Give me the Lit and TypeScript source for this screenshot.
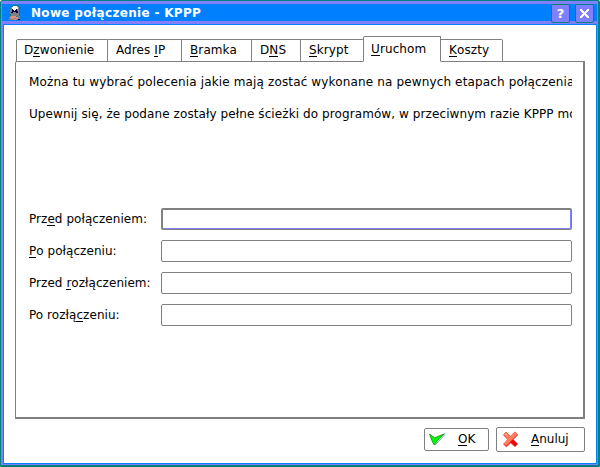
import { LitElement, html, css, svg } from "lit";
import { customElement, property } from "lit/decorators.js";

/* Splits "D&zwonienie" so that the letter after & is underlined. */
const mnemonic = (s: string) => {
  const i = s.indexOf("&");
  return i < 0 ? html`${s}` : html`${s.slice(0, i)}<u>${s[i + 1]}</u>${s.slice(i + 2)}`;
};

const pixels = (rows: string[], colors: Record<string, string>) => {
  const out: unknown[] = [];
  rows.forEach((row, y) => {
    for (let x = 0; x < row.length; ) {
      let end = x + 1;
      while (end < row.length && row[end] === row[x]) end++;
      if (colors[row[x]]) out.push(svg`<rect x=${x} y=${y} width=${end - x} height="1" fill=${colors[row[x]]}/>`);
      x = end;
    }
  });
  return html`<svg width=${rows[0].length} height=${rows.length} shape-rendering="crispEdges">${out}</svg>`;
};

const appIcon = pixels(
  [
    "....tttttt..",
    "..ttwwwwgt..",
    "..gwwwwwwgt.",
    ".tgwwwwwwgt.",
    ".ggkwwwkggt.",
    ".ggkkwkkggt.",
    ".ggnkkknkgt.",
    ".gkkgggkkgt.",
    ".gggggggggt.",
    ".tggggggggt.",
    ".tggggggggt.",
    ".gppppptggg.",
    "gppppppppgg.",
    "ggpppggppgg.",
    "gggggppggkk.",
  ],
  { t: "#207878", w: "#ffffff", g: "#808080", k: "#000040", n: "#000080", p: "#e09080" },
);

const closeGlyph = pixels(
  ["ww.....ww", "www...www", ".www.www.", "..wwwww..", "...www...", "..wwwww..", ".www.www.", "www...www", "ww.....ww"],
  { w: "#fff" },
);

const okIcon = html`<svg width="16" height="13" viewBox="0 0 16 13">
  <path d="M2 4.5 L6 12 L9.5 8.5 L15.5 2" fill="none" stroke="#80a0c0" stroke-width="1"/>
  <path d="M.5 1 L5.5 4.8 L15.5 .8 L9 7 L5.2 11.8 L3.5 9 Z" fill="#00ff00" stroke="#008000" stroke-width=".7"/>
</svg>`;

const cancelIcon = html`<svg width="17" height="17" viewBox="0 0 17 17">
  <path d="M1.5 4 L4 1.5 L8.5 5.5 L13 1 L16 4 L11.5 8.5 L16 13 L13 16 L8.5 12 L4.5 16 L1.5 13.5 L6 9 Z" fill="#ff0000" stroke="#c0a0a0" stroke-width=".6"/>
  <path d="M1.5 3.5 L4 1 L8.5 5.3 L13 .8 L15.5 3.5 L10.8 8 L4.3 14.8 L1.5 13 L5.7 8.5 Z" fill="#ff8060" stroke="#ff5040" stroke-width=".6"/>
  <path d="M3 3h2v1h-2z" fill="#ffc060"/>
</svg>`;

@customElement("title-button")
class TitleButton extends LitElement {
  static styles = css`
    :host { display: flex; align-items: center; justify-content: center; box-sizing: border-box; width: 19px; height: 19px; border: 1px solid #008080; border-radius: 2px; background: #8080ff; color: #fff; font: bold 13px/17px "DejaVu Sans", sans-serif; }
  `;
  render() { return html`<slot></slot>`; }
}

@customElement("path-field")
class PathField extends LitElement {
  @property() label = "";
  @property({ type: Boolean, reflect: true }) active = false;
  static styles = css`
    :host { display: flex; height: 22px; }
    .label { width: 132px; line-height: 22px; white-space: nowrap; letter-spacing: .05px; }
    .box { flex: 1; box-sizing: border-box; border: 1px solid #808080; border-radius: 2px; background: #fff; }
    :host([active]) .box { border-top-width: 2px; border-left-width: 2px; box-shadow: inset -1px -1px #8080ff; }
    u { text-decoration: none; box-shadow: inset 0 -1px #000; display: inline-block; line-height: 14px; }
  `;
  render() { return html`<div class="label">${mnemonic(this.label)}</div><div class="box"></div>`; }
}

@customElement("app-root")
class AppRoot extends LitElement {
  static styles = css`
    :host { display: block; width: 600px; height: 467px; background: #fff; color: #000; font: 12px/15px "DejaVu Sans", sans-serif; }
    * { box-sizing: border-box; }
    u { text-decoration: none; box-shadow: inset 0 -1px #000; display: inline-block; line-height: 14px; }
    .frame { height: 467px; border: solid #008080; border-width: 1px 2px 2px 1px; border-radius: 3px 2px 1px 1px; background: #8080ff; padding: 3px 1px 1px 2px; display: flex; flex-direction: column; }
    .titlebar { height: 17px; background: #0080ff; display: flex; align-items: center; color: #fff; font-weight: bold; margin-left: -1px; padding-left: 7px; }
    .titlebar svg { flex: none; }
    .title { flex: 1; margin-left: 10px; padding-top: 2px; white-space: nowrap; letter-spacing: .32px; }
    .titlebar title-button { margin: 2px 5px 0 0; }
    .titlebar title-button:last-child { margin-right: 3px; }
    .body { flex: 1; margin-top: 3px; border: 1px solid #0080ff; background: #fff; padding: 11px; display: flex; flex-direction: column; }
    .tabs { display: flex; align-items: flex-end; height: 26px; padding-left: 1px; position: relative; z-index: 1; margin-bottom: -1px; letter-spacing: .1px; }
    .tab { height: 23px; border: 1px solid #808080; border-left: 0; padding-left: 8px; line-height: 21px; white-space: nowrap; }
    .tab:first-child { border-left: 1px solid #808080; padding-left: 7px; border-top-left-radius: 2px; }
    .tab:last-child { border-top-right-radius: 2px; }
    .tab.active { height: 26px; border-left: 1px solid #808080; border-bottom-color: #fff; margin-left: -1px; padding-left: 7px; border-radius: 2px 1px 0 0; line-height: 24px; }
    .pane { height: 358px; border: solid #808080; border-width: 1px 2px 2px 1px; border-radius: 2px 0 0 0; padding: 13px 11px 0 13px; }
    .info { white-space: nowrap; overflow: hidden; height: 16px; margin-bottom: 16px; letter-spacing: .145px; }
    .info + .info { letter-spacing: .09px; }
    .fields { display: flex; flex-direction: column; gap: 10px; margin-top: 85px; }
    .actions { display: flex; justify-content: flex-end; align-items: center; gap: 7px; margin-top: 8px; height: 25px; }
    .button { display: flex; align-items: center; border: 1px solid #808080; border-radius: 2px; height: 23px; }
    .ok { width: 65px; padding-left: 4px; gap: 13px; }
    .cancel { width: 89px; height: 25px; padding-left: 5px; gap: 12px; }
  `;
  tabs: [string, number][] = [["D&zwonienie", 92], ["Adres &IP", 74], ["&Bramka", 70], ["D&NS", 49], ["&Skrypt", 63], ["&Uruchom", 78], ["&Koszty", 62]];
  render() {
    return html`<div class="frame">
      <div class="titlebar">${appIcon}<div class="title">Nowe połączenie - KPPP</div>
        <title-button>?</title-button><title-button>${closeGlyph}</title-button></div>
      <div class="body">
        <div class="tabs">${this.tabs.map(([t, w], i) => html`<div class="tab ${i === 5 ? "active" : ""}" style="width:${w}px">${mnemonic(t)}</div>`)}</div>
        <div class="pane">
          <div class="info">Można tu wybrać polecenia jakie mają zostać wykonane na pewnych etapach połączenia</div>
          <div class="info">Upewnij się, że podane zostały pełne ścieżki do programów, w przeciwnym razie KPPP mo</div>
          <div class="fields">
            <path-field label="Prz&ed połączeniem:" active></path-field>
            <path-field label="&Po połączeniu:"></path-field>
            <path-field label="Przed &rozłączeniem:"></path-field>
            <path-field label="Po rozłą&czeniu:"></path-field>
          </div>
        </div>
        <div class="actions">
          <div class="button ok">${okIcon}<span>${mnemonic("&OK")}</span></div>
          <div class="button cancel">${cancelIcon}<span>${mnemonic("&Anuluj")}</span></div>
        </div>
      </div>
    </div>`;
  }
}
